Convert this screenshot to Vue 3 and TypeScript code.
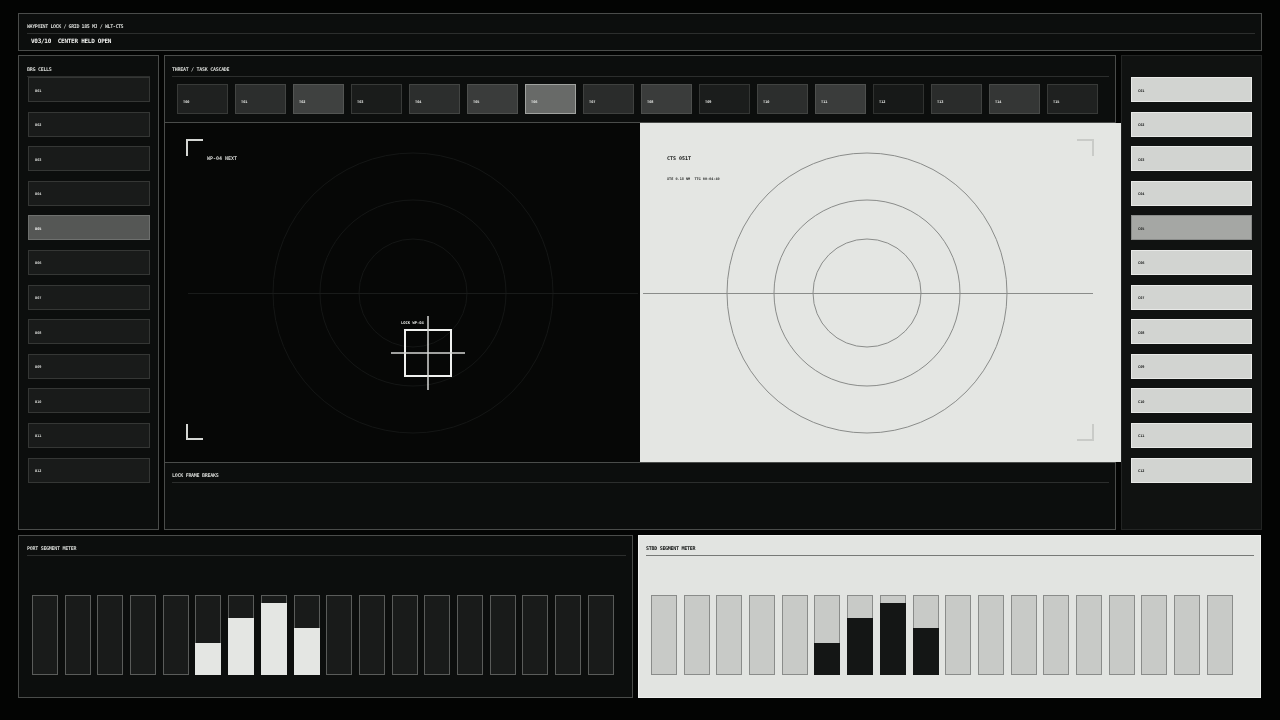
<script setup lang="ts">
interface Cell {
  id: string
  active?: boolean
}

interface Task {
  id: string
  bg: string
  border: string
}

interface Segment {
  fill: number
}

const portCells: Cell[] = Array.from({ length: 12 }, (_, i) => ({
  id: 'B' + String(i + 1).padStart(2, '0'),
  active: i === 4,
}))

const stbdCells: Cell[] = Array.from({ length: 12 }, (_, i) => ({
  id: 'C' + String(i + 1).padStart(2, '0'),
  active: i === 4,
}))

const taskShades = [
  ['#1f2120', '#383a38'], ['#2c2e2d', '#434543'], ['#3f4140', '#535553'], ['#1a1c1b', '#383a38'],
  ['#2c2e2d', '#434543'], ['#3a3c3b', '#4e504e'], ['#686a68', '#a0a29f'], ['#2a2c2b', '#3f413f'],
  ['#3a3c3b', '#4c4e4c'], ['#1b1d1c', '#343634'], ['#2c2e2d', '#414341'], ['#3a3c3b', '#4e504e'],
  ['#171918', '#303230'], ['#2a2c2b', '#3f413f'], ['#343635', '#484a48'], ['#1f2120', '#383a38'],
]

const tasks: Task[] = taskShades.map(([bg, border], i) => ({
  id: 'T' + String(i).padStart(2, '0'),
  bg,
  border,
}))

const fills: Record<number, number> = { 5: 41, 6: 73, 7: 92, 8: 60 }
const segments: Segment[] = Array.from({ length: 18 }, (_, i) => ({ fill: fills[i] ?? 0 }))

const radii = [140, 93, 54]
</script>

<template>
  <div class="screen">
    <header class="panel top">
      <div class="title top-title">WAYPOINT LOCK / GRID 185 MJ / WLT-CTS</div>
      <div class="top-status">V03/10 &nbsp;CENTER HELD OPEN</div>
    </header>

    <div class="middle">
      <aside class="panel side">
        <div class="title">BRG CELLS</div>
        <div class="cell-list">
          <div v-for="c in portCells" :key="c.id" class="cell" :class="{ 'cell-active': c.active }">{{ c.id }}</div>
        </div>
      </aside>

      <main class="panel center">
        <section class="cascade">
          <div class="title">THREAT / TASK CASCADE</div>
          <div class="task-row">
            <div
              v-for="t in tasks"
              :key="t.id"
              class="task"
              :style="{ background: t.bg, borderColor: t.border }"
            >{{ t.id }}</div>
          </div>
        </section>

        <section class="stage">
          <div class="half half-dark">
            <svg class="scope" width="475" height="339" viewBox="0 0 475 339">
              <circle v-for="r in radii" :key="r" cx="248" cy="170" :r="r" fill="none" stroke="#141615" stroke-width="1" />
              <line x1="23" y1="170.500" x2="473" y2="170.500" stroke="#191b1a" stroke-width="1" />
              <path d="M22 33 V17 H38" fill="none" stroke="#d4d6d3" stroke-width="2" />
              <path d="M22 301 V316 H38" fill="none" stroke="#d4d6d3" stroke-width="2" />
              <rect x="240" y="207" width="46" height="46" fill="none" stroke="#f0f1ef" stroke-width="2" />
              <line x1="226" y1="230" x2="300" y2="230" stroke="#d4d6d3" stroke-width="1.500" />
              <line x1="263" y1="193" x2="263" y2="267" stroke="#d4d6d3" stroke-width="1.500" />
            </svg>
            <span class="wp-next">WP-04 NEXT</span>
            <span class="lock-tag">LOCK WP-04</span>
          </div>
          <div class="half half-light">
            <svg class="scope" width="481" height="339" viewBox="0 0 481 339">
              <circle v-for="r in radii" :key="r" cx="227" cy="170" :r="r" fill="none" stroke="#8a8c8a" stroke-width="1" />
              <line x1="3" y1="170.500" x2="453" y2="170.500" stroke="#8a8c8a" stroke-width="1" />
              <path d="M437 17 H453 V33" fill="none" stroke="#c9cbc8" stroke-width="2" />
              <path d="M453 301 V317 H437" fill="none" stroke="#c9cbc8" stroke-width="2" />
            </svg>
            <span class="cts">CTS 051T</span>
            <span class="xte">XTE 0.18 NM &nbsp;TTG <b>00:04:40</b></span>
          </div>
        </section>

        <section class="breaks">
          <div class="title">LOCK FRAME BREAKS</div>
        </section>
      </main>

      <aside class="panel side side-right">
        <div class="cell-list cell-list-right">
          <div v-for="c in stbdCells" :key="c.id" class="cell cell-light" :class="{ 'cell-light-active': c.active }">{{ c.id }}</div>
        </div>
      </aside>
    </div>

    <div class="bottom">
      <section class="panel meter">
        <div class="title">PORT SEGMENT METER</div>
        <div class="bars">
          <div v-for="(s, i) in segments" :key="i" class="bar">
            <div class="bar-fill" :style="{ height: s.fill + '%' }"></div>
          </div>
        </div>
      </section>
      <section class="panel meter meter-light">
        <div class="title">STBD SEGMENT METER</div>
        <div class="bars">
          <div v-for="(s, i) in segments" :key="i" class="bar">
            <div class="bar-fill" :style="{ height: s.fill + '%' }"></div>
          </div>
        </div>
      </section>
    </div>
  </div>
</template>

<style>
html, body { margin: 0; background: #030403; }
</style>

<style scoped>
.screen {
  width: 1280px;
  height: 720px;
  box-sizing: border-box;
  padding: 13px 18px 22px;
  display: flex;
  flex-direction: column;
  gap: 4px;
  background: #030403;
  font-family: "DejaVu Sans Mono", "Liberation Mono", monospace;
  color: #e4e6e3;
  overflow: hidden;
  filter: blur(0.3px);
}
.panel {
  box-sizing: border-box;
  border: 1px solid #4a4c4a;
  background: #0c0e0d;
}
.title {
  font-size: 5px;
  line-height: 6px;
  font-weight: 700;
  letter-spacing: -0.28px;
  color: #d4d6d3;
  padding: 0 0 4px;
  border-bottom: 1px solid #2c2e2d;
}

.top {
  height: 38px;
  padding: 9px 6px 0 8px;
  flex: none;
}
.top-title { letter-spacing: -0.41px; }
.top-status {
  font-size: 6px;
  line-height: 8px;
  font-weight: 700;
  letter-spacing: -0.27px;
  padding: 3px 0 0 4px;
  color: #f0f1ef;
}

.middle {
  display: grid;
  grid-template-columns: 141px 952px 141px;
  gap: 5px;
  height: 475px;
  flex: none;
}
.side {
  padding: 10px 8px 0;
}
.side-right {
  border-color: #232524;
  background: #101211;
}
.cell-list {
  display: flex;
  flex-direction: column;
  gap: 9.600px;
  padding: 0 0 0 1px;
}
.cell-list-right { padding: 11px 1px 0 1px; }
.cell {
  box-sizing: border-box;
  height: 25px;
  border: 1px solid #353735;
  background: #191b1a;
  color: #d4d6d3;
  font-size: 3.600px;
  font-weight: 700;
  padding: 2px 6px 0;
  display: flex;
  align-items: center;
}
.cell-active { background: #555755; border-color: #6e706e; color: #f0f1ef; }
.cell-light { background: #d2d4d1; border-color: #e8e9e7; color: #1a1c1b; }
.cell-light-active { background: #a5a7a4; border-color: #8a8c8a; }

.center {
  display: flex;
  flex-direction: column;
  position: relative;
  z-index: 1;
}
.cascade {
  height: 67px;
  flex: none;
  box-sizing: border-box;
  padding: 10px 6px 0 7px;
  border-bottom: 1px solid #4a4c4a;
}
.task-row {
  display: flex;
  gap: 7px;
  padding: 7px 0 0 5px;
}
.task {
  box-sizing: border-box;
  width: 51px;
  height: 30px;
  flex: none;
  border: 1px solid #3a3c3a;
  font-size: 3.600px;
  font-weight: 700;
  color: #e4e6e3;
  padding: 5px 5px 0;
  display: flex;
  align-items: center;
}
.stage {
  display: flex;
  height: 339px;
  flex: none;
  margin-right: -6px;
}
.half {
  position: relative;
  height: 100%;
  flex: none;
}
.half-dark { width: 475px; background: #060706; }
.half-light { width: 481px; background: #e4e6e3; color: #141615; }
.scope { display: block; }
.wp-next {
  position: absolute;
  left: 42px;
  top: 32px;
  font-size: 5px;
  line-height: 6px;
  font-weight: 700;
  color: #d4d6d3;
}
.lock-tag {
  position: absolute;
  left: 236px;
  top: 197px;
  font-size: 3.800px;
  line-height: 5px;
  font-weight: 700;
  color: #e4e6e3;
}
.cts {
  position: absolute;
  left: 27px;
  top: 32px;
  font-size: 5px;
  line-height: 6px;
  font-weight: 700;
}
.xte {
  position: absolute;
  left: 27px;
  top: 54px;
  font-size: 3.500px;
  line-height: 5px;
  font-weight: 700;
  color: #2c2e2d;
}
.breaks {
  flex: 1;
  padding: 9px 6px 0 7px;
  border-top: 1px solid #4a4c4a;
}

.bottom {
  display: grid;
  grid-template-columns: 615px 623px;
  gap: 5px;
  height: 163px;
  flex: none;
  margin-top: 1px;
}
.meter {
  padding: 9px 6px 0 8px;
}
.bars {
  display: flex;
  gap: 6.700px;
  width: 582px;
  margin: 39px 0 0 5px;
}
.bar {
  position: relative;
  box-sizing: border-box;
  flex: none;
  width: 26px;
  height: 80px;
  border: 1px solid #5a5c5a;
  background: #191b1a;
  display: flex;
  align-items: flex-end;
}
.bar-fill {
  flex: none;
  width: calc(100% + 2px);
  margin: 0 -1px -1px;
  background: #e4e6e3;
}
.meter-light {
  background: #e2e4e1;
  border-color: #f0f1ef;
  padding-left: 7px;
}
.meter-light .title {
  color: #141615;
  border-bottom-color: #777977;
}
.meter-light .bar {
  background: #c8cac7;
  border-color: #8a8c8a;
}
.meter-light .bar-fill { background: #141615; }
</style>
